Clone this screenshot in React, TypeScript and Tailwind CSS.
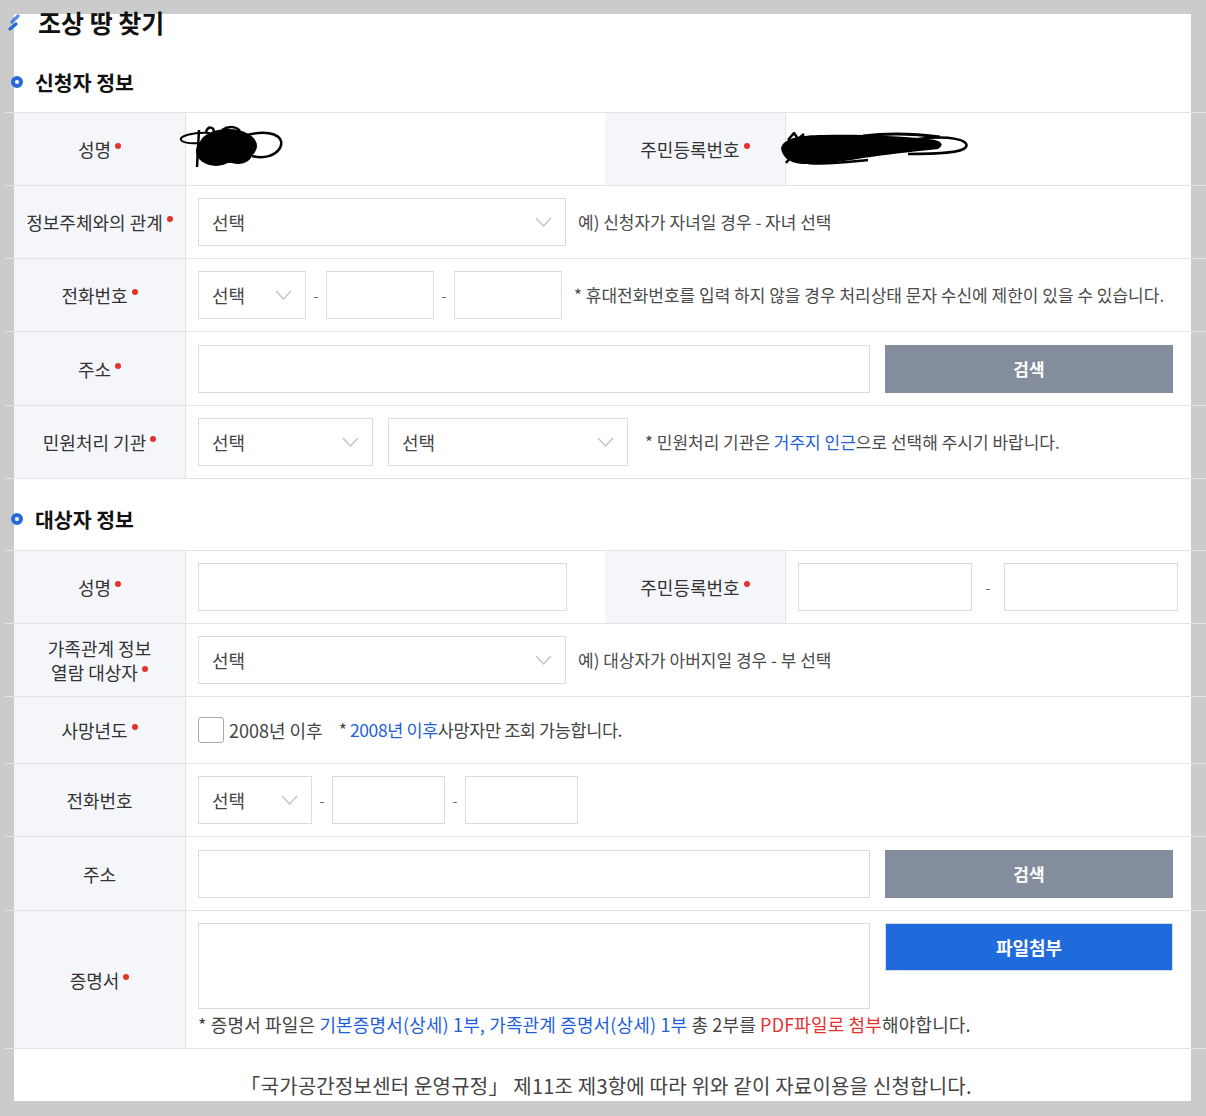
import React from 'react';

const FONT = "font-['Noto_Sans_CJK_KR','Noto_Sans',sans-serif]";

function Chevron() {
  return (
    <svg width="17" height="10" viewBox="0 0 17 10" fill="none">
      <path d="M1 1 L8.5 9 L16 1" stroke="#c4c4c4" strokeWidth="1.4" />
    </svg>
  );
}

function Select({ width }: { width: string }) {
  return (
    <div className={`${width} h-[48px] shrink-0 border border-[#dcdcdc] bg-white flex items-center justify-between pl-[13px] pr-[13px] text-[18px] text-[#444]`}>
      <span>선택</span>
      <Chevron />
    </div>
  );
}

function Input({ width, height = 'h-[48px]' }: { width: string; height?: string }) {
  return <div className={`${width} ${height} shrink-0 border border-[#dcdcdc] bg-white`} />;
}

function Dash({ w = 'w-[20px]' }: { w?: string }) {
  return <span className={`${w} shrink-0 text-center text-[14px] text-[#666]`}>-</span>;
}

function Dot() {
  return <span className="inline-block ml-[4px] w-[6px] h-[6px] rounded-full bg-[#e5322f] align-[8px]" />;
}

function Label({ children, req = true, w = 'w-[172px]' }: { children: React.ReactNode; req?: boolean; w?: string }) {
  return (
    <div className={`${w} shrink-0 h-full bg-[#f5f6fa] border-r border-[#e4e4e4] flex items-center justify-center text-[18px] text-[#333]`}>
      <span className="leading-[24px] text-center">
        {children}
        {req && <Dot />}
      </span>
    </div>
  );
}

function Row({ h = 'h-[73px]', children }: { h?: string; children: React.ReactNode }) {
  return (
    <div className={`flex ${h} border-b border-[#e4e4e4]`}>
      <div className="w-[9px] shrink-0" />
      {children}
    </div>
  );
}

function SectionTitle({ text, h }: { text: string; h: string }) {
  return (
    <div className={`${h} flex items-center pl-[11px] gap-[12px]`}>
      <span className="w-[12px] h-[12px] rounded-full border-[4px] border-[#2a6ad8] bg-white" />
      <span className="text-[20.5px] font-bold text-[#111]">{text}</span>
    </div>
  );
}

function SearchButton() {
  return (
    <div className="w-[288px] h-[48px] ml-[15px] bg-[#838d9d] flex items-center justify-center text-[17px] font-bold text-white">
      검색
    </div>
  );
}

// 이름 가림 낙서
function Scribble1() {
  return (
    <svg width="110" height="46" viewBox="0 0 110 46" className="-ml-[8px] -mt-[4px]">
      <ellipse cx="50" cy="22" rx="29" ry="17" fill="#000" />
      <ellipse cx="38" cy="27" rx="20" ry="15" fill="#000" />
      <ellipse cx="60" cy="30" rx="14" ry="10" fill="#000" />
      <path d="M66 12 C 92 4, 108 12, 102 24 C 97 32, 86 35, 74 32" stroke="#000" strokeWidth="2.5" fill="none" />
      <path d="M32 9 C 16 8, -2 12, 4 17 C 10 21, 24 19, 34 17" stroke="#000" strokeWidth="2" fill="none" />
      <path d="M21 6 L19 43" stroke="#000" strokeWidth="2.5" />
      <path d="M28 8 C 30 2, 36 2, 36 9" stroke="#000" strokeWidth="2.5" fill="none" />
      <path d="M44 6 C 50 2, 58 2, 62 7" stroke="#000" strokeWidth="2.5" fill="none" />
    </svg>
  );
}

// 주민번호 가림 낙서
function Scribble2() {
  return (
    <svg width="192" height="36" viewBox="0 0 192 36" className="-ml-[8px] mt-[2px]">
      <path d="M3 16 C 6 6, 22 3, 45 3 C 80 2, 120 4, 150 7 C 162 8, 168 12, 160 17 C 130 20, 105 23, 85 26 C 62 30, 40 32, 24 32 C 10 31, 4 24, 3 16 Z" fill="#000" />
      <path d="M10 8 L16 1 L20 7 L26 2" stroke="#000" strokeWidth="2.5" fill="none" />
      <path d="M12 26 L8 31" stroke="#000" strokeWidth="2.5" />
      <path d="M30 31 C 50 33, 70 30, 90 28" stroke="#000" strokeWidth="2.5" fill="none" />
      <path d="M140 7 C 172 3, 192 8, 188 15 C 184 21, 160 22, 130 22" stroke="#000" strokeWidth="2.5" fill="none" />
      <path d="M85 4 C 115 0, 140 2, 162 5" stroke="#000" strokeWidth="3" fill="none" />
    </svg>
  );
}

export default function App() {
  return (
    <div className={`${FONT} w-[1206px] h-[1116px] bg-[#cbcbcb] pt-[14px] pl-[14px] overflow-hidden`}>
      <div className="w-[1177px] h-[1087px] bg-white flex flex-col">
        <div className="-ml-[14px] -mt-[14px] w-[1206px]">
          {/* title */}
          <div className="h-[46px] flex items-center">
            <svg width="24" height="24" viewBox="0 0 24 24" className="ml-[3px] mt-[3px]">
              <path d="M15 3 L9 9" stroke="#2468d8" strokeWidth="3.2" strokeLinecap="round" opacity="0.75" />
              <path d="M13 11 L7 16" stroke="#2468d8" strokeWidth="3.2" strokeLinecap="round" />
            </svg>
            <span className="ml-[11px] text-[25px] font-bold text-[#111]">조상 땅 찾기</span>
          </div>

          <div className="pt-[6px]">
            <SectionTitle text="신청자 정보" h="h-[60px]" />
          </div>

          {/* 신청자 정보 */}
          <div className="ml-[5px] w-[1201px] border-t border-[#e4e4e4]">
            <Row>
              <Label>성명</Label>
              <div className="w-[419px] shrink-0 flex items-center">
                <Scribble1 />
              </div>
              <Label w="w-[181px]">주민등록번호</Label>
              <div className="flex-1 flex items-center">
                <Scribble2 />
              </div>
            </Row>
            <Row>
              <Label>정보주체와의 관계</Label>
              <div className="flex-1 flex items-center pl-[12px]">
                <Select width="w-[368px]" />
                <span className="ml-[12px] text-[17px] text-[#4a4a4a]">예) 신청자가 자녀일 경우 - 자녀 선택</span>
              </div>
            </Row>
            <Row>
              <Label>전화번호</Label>
              <div className="flex-1 flex items-center pl-[12px]">
                <Select width="w-[108px]" />
                <Dash />
                <Input width="w-[108px]" />
                <Dash />
                <Input width="w-[108px]" />
                <span className="ml-[12px] text-[17px] text-[#4a4a4a]">* 휴대전화번호를 입력 하지 않을 경우 처리상태 문자 수신에 제한이 있을 수 있습니다.</span>
              </div>
            </Row>
            <Row h="h-[74px]">
              <Label>주소</Label>
              <div className="flex-1 flex items-center pl-[12px]">
                <Input width="w-[672px]" />
                <SearchButton />
              </div>
            </Row>
            <Row>
              <Label>민원처리 기관</Label>
              <div className="flex-1 flex items-center pl-[12px]">
                <Select width="w-[175px]" />
                <div className="w-[15px]" />
                <Select width="w-[240px]" />
                <span className="ml-[17px] text-[17px] text-[#4a4a4a]">
                  * 민원처리 기관은 <span className="text-[#1f5fd9]">거주지 인근</span>으로 선택해 주시기 바랍니다.
                </span>
              </div>
            </Row>
          </div>

          <div className="pt-[9px]">
            <SectionTitle text="대상자 정보" h="h-[62px]" />
          </div>

          {/* 대상자 정보 */}
          <div className="ml-[5px] w-[1201px] border-t border-[#e4e4e4]">
            <Row>
              <Label>성명</Label>
              <div className="w-[419px] shrink-0 flex items-center pl-[12px]">
                <Input width="w-[369px]" />
              </div>
              <Label w="w-[181px]">주민등록번호</Label>
              <div className="flex-1 flex items-center pl-[12px]">
                <Input width="w-[174px]" />
                <Dash w="w-[32px]" />
                <Input width="w-[174px]" />
              </div>
            </Row>
            <Row>
              <Label>
                가족관계 정보
                <br />
                열람 대상자
              </Label>
              <div className="flex-1 flex items-center pl-[12px]">
                <Select width="w-[368px]" />
                <span className="ml-[12px] text-[17px] text-[#4a4a4a]">예) 대상자가 아버지일 경우 - 부 선택</span>
              </div>
            </Row>
            <Row h="h-[67px]">
              <Label>사망년도</Label>
              <div className="flex-1 flex items-center pl-[12px]">
                <span className="w-[26px] h-[26px] rounded-[3px] border border-[#a9a9a9] bg-white shrink-0" />
                <span className="ml-[5px] text-[18px] text-[#444]">2008년 이후</span>
                <span className="ml-[16px] text-[17.5px] text-[#444] tracking-[-0.4px]">
                  * <span className="text-[#1f5fd9]">2008년 이후</span>사망자만 조회 가능합니다.
                </span>
              </div>
            </Row>
            <Row>
              <Label req={false}>전화번호</Label>
              <div className="flex-1 flex items-center pl-[12px]">
                <Select width="w-[114px]" />
                <Dash />
                <Input width="w-[113px]" />
                <Dash />
                <Input width="w-[113px]" />
              </div>
            </Row>
            <Row h="h-[74px]">
              <Label req={false}>주소</Label>
              <div className="flex-1 flex items-center pl-[12px]">
                <Input width="w-[672px]" />
                <SearchButton />
              </div>
            </Row>
            <Row h="h-[138px]">
              <Label>증명서</Label>
              <div className="flex-1 flex flex-col pl-[12px] pt-[12px]">
                <div className="flex items-start">
                  <Input width="w-[672px]" height="h-[86px]" />
                  <div className="w-[288px] h-[48px] ml-[15px] bg-[#1f6bdb] border border-[#d6dcea] flex items-center justify-center text-[18px] font-bold text-white">
                    파일첨부
                  </div>
                </div>
                <div className="mt-[2px] text-[18px] text-[#444] leading-[26px] tracking-[0.15px]">
                  * 증명서 파일은 <span className="text-[#1f5fd9]">기본증명서(상세) 1부, 가족관계 증명서(상세) 1부</span> 총 2부를{' '}
                  <span className="text-[#e5322f]">PDF파일로 첨부</span>해야합니다.
                </div>
              </div>
            </Row>
          </div>

          <div className="h-[74px] pl-[6px] flex items-center justify-center text-[20px] text-[#444] tracking-[0.2px]">
            「국가공간정보센터 운영규정」 제11조 제3항에 따라 위와 같이 자료이용을 신청합니다.
          </div>
        </div>
      </div>
    </div>
  );
}
